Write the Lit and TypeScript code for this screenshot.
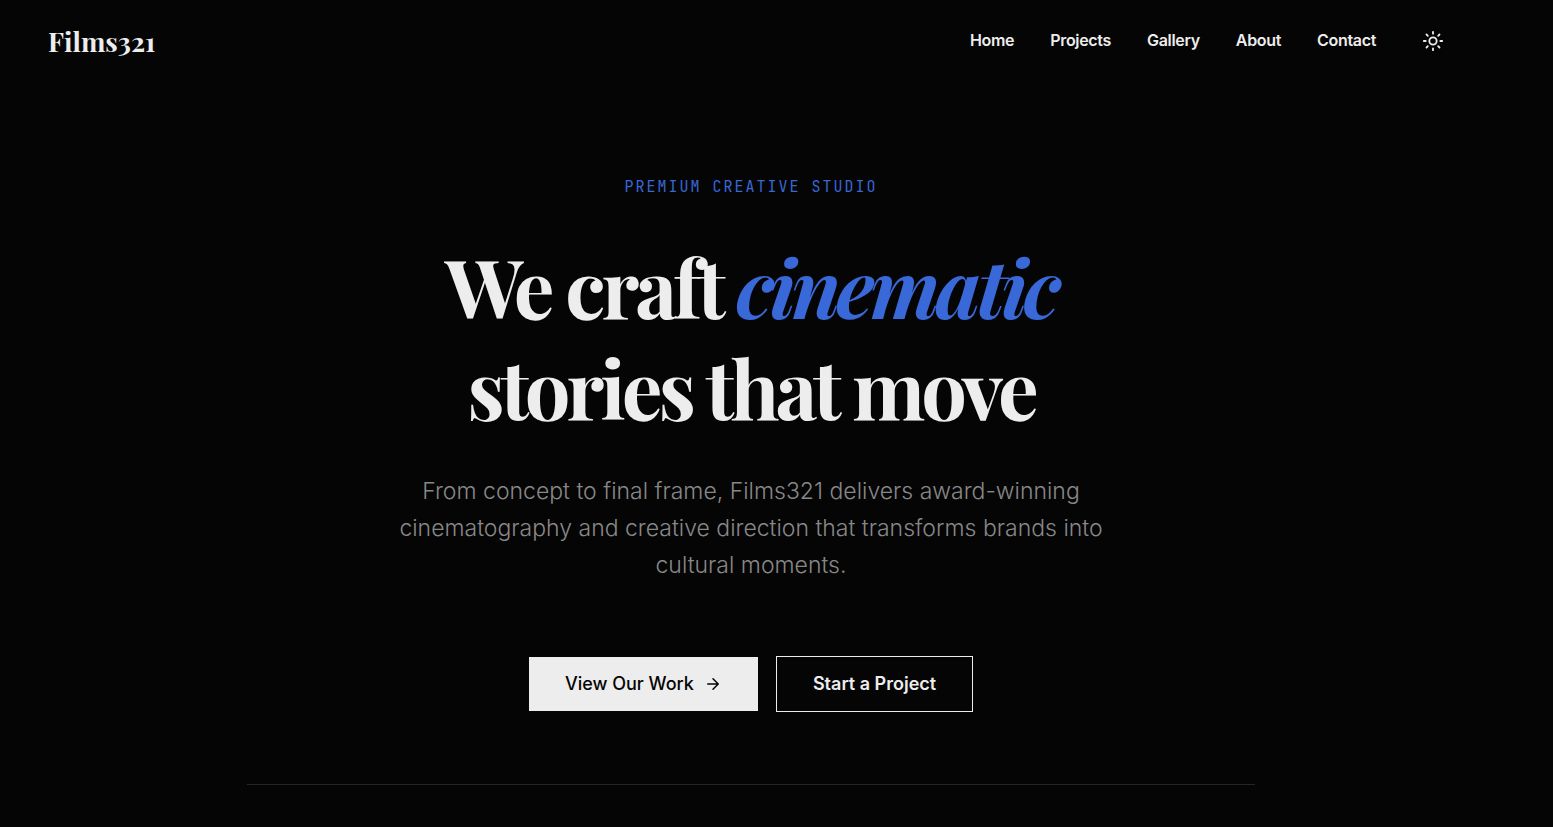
import { LitElement, html, css } from "lit";
import { customElement, state } from "lit/decorators.js";

@customElement("app-root")
export class AppRoot extends LitElement {
  static styles = css`
    :host {
      display: block;
      box-sizing: border-box;
      min-height: 100vh;
      padding-right: 51px;
      background: #050505;
      color: #ededed;
      font-family: Inter, "Open Sans", sans-serif;
      font-size: 18px;
    }
    a { color: inherit; text-decoration: none; }
    .header {
      display: flex;
      align-items: center;
      justify-content: space-between;
      padding: 20px 48px;
    }
    .logo {
      font: 700 27px/42px "Playfair Display", "Liberation Serif", serif;
    }
    .nav { display: flex; align-items: center; gap: 36px; }
    .nav a { font-size: 16px; line-height: 24px; padding-bottom: 2px; font-weight: 600; letter-spacing: -0.02em; }
    .theme {
      display: flex;
      padding: 10px;
      border: 0;
      background: none;
      color: inherit;
      cursor: pointer;
    }
    .hero {
      display: flex;
      flex-direction: column;
      align-items: center;
      max-width: 1008px;
      margin: 0 auto;
      padding: 93px 0 72px;
      border-bottom: 1px solid #262626;
      text-align: center;
    }
    .eyebrow {
      margin: 0 0 36px;
      font: 400 15px/24px "JetBrains Mono", "Liberation Mono", monospace;
      letter-spacing: 2px;
      text-transform: uppercase;
      color: #3968d9;
    }
    .title {
      margin: 0 0 36px;
      max-width: 756px;
      font: 700 81px/101px "Playfair Display", "Liberation Serif", serif;
      letter-spacing: -0.05em;
    }
    .accent { color: #3968d9; font-style: oblique 14deg; }
    .lead {
      margin: 0 0 72px;
      max-width: 720px;
      font-size: 23px;
      line-height: 37px;
      font-weight: 300;
      color: #888888;
    }
    .actions { display: flex; align-items: center; gap: 18px; }
    .button {
      display: flex;
      align-items: center;
      gap: 10px;
      padding: 13px 36px;
      font-size: 18px;
      line-height: 28px;
      font-weight: 600;
    }
    .solid { background: #ededed; color: #050505; font-weight: 500; }
    .outline { border: 1px solid #ededed; }
    svg { display: block; fill: none; stroke: currentColor; stroke-width: 2; stroke-linecap: round; stroke-linejoin: round; }
  `;

  @state() private light = false;

  private links = ["Home", "Projects", "Gallery", "About", "Contact"];

  render() {
    return html`
      <header class="header">
        <a class="logo" href="#home">Films321</a>
        <nav class="nav" aria-label="Main">
          ${this.links.map((l) => html`<a href="#${l.toLowerCase()}">${l}</a>`)}
          <button class="theme" aria-label="Toggle theme" aria-pressed=${this.light} @click=${() => (this.light = !this.light)}>
            <svg width="22" height="22" viewBox="0 0 24 24">
              <circle cx="12" cy="12" r="4" />
              <path d="M12 2v2M12 20v2M4.93 4.93l1.41 1.41M17.66 17.66l1.41 1.41M2 12h2M20 12h2M6.34 17.66l-1.41 1.41M19.07 4.93l-1.41 1.41" />
            </svg>
          </button>
        </nav>
      </header>
      <main class="hero">
        <p class="eyebrow">Premium Creative Studio</p>
        <h1 class="title">We craft <em class="accent">cinematic</em> stories that move</h1>
        <p class="lead">
          From concept to final frame, Films321 delivers award-winning cinematography and creative direction that
          transforms brands into cultural moments.
        </p>
        <div class="actions">
          <a class="button solid" href="#projects">
            View Our Work
            <svg width="18" height="18" viewBox="0 0 24 24"><path d="M5 12h14M12 5l7 7-7 7" /></svg>
          </a>
          <a class="button outline" href="#contact">Start a Project</a>
        </div>
      </main>
    `;
  }
}
